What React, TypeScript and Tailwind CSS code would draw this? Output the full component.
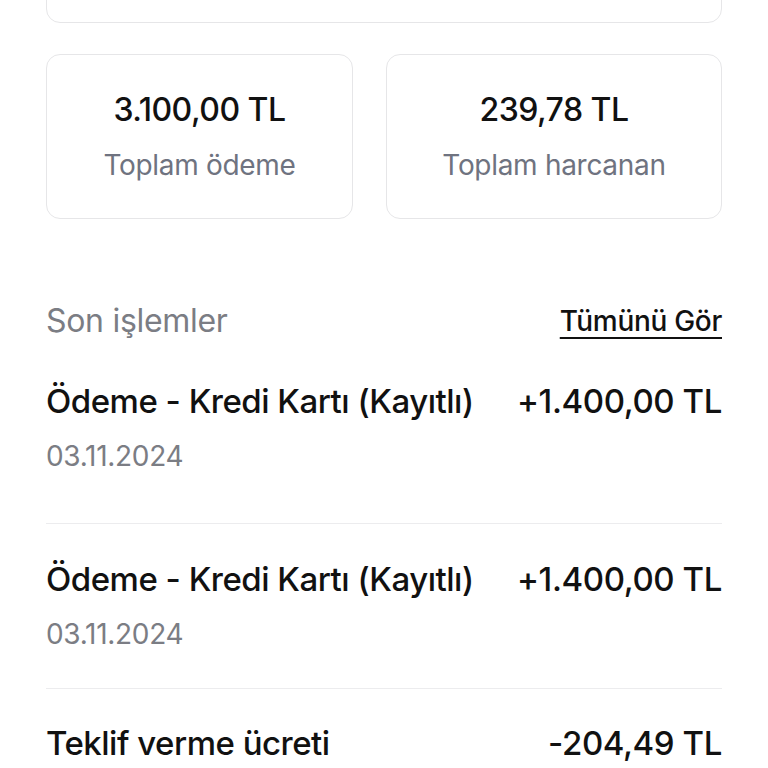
import React from "react";

type Tx = {
  title: string;
  date?: string;
  amount: string;
  pad: string;
};

const txs: Tx[] = [
  { title: "Ödeme - Kredi Kartı (Kayıtlı)", date: "03.11.2024", amount: "+1.400,00 TL", pad: "border-b border-[#ececee] pb-[53px]" },
  { title: "Ödeme - Kredi Kartı (Kayıtlı)", date: "03.11.2024", amount: "+1.400,00 TL", pad: "border-b border-[#ececee] pt-[39px] pb-[40px]" },
  { title: "Teklif verme ücreti", amount: "-204,49 TL", pad: "pt-[38px]" },
];

function StatCard({ value, label, className }: { value: string; label: string; className: string }) {
  return (
    <div
      className={`flex h-[165px] flex-col items-center justify-center rounded-[14px] border border-[#e6e6e8] bg-white ${className}`}
    >
      <p className="text-[32px] font-medium leading-none tracking-[-0.5px] text-[#111]">{value}</p>
      <p className="mt-[25px] text-[28px] leading-none tracking-[-0.3px] text-[#6f7380]">{label}</p>
    </div>
  );
}

export default function App() {
  return (
    <div
      className="h-[768px] w-[768px] overflow-hidden bg-white px-[46px]"
      style={{ fontFamily: "Inter, 'Noto Sans', sans-serif" }}
    >
      <div className="-mt-[40px] h-[63px] rounded-[14px] border border-[#e6e6e8]" />

      <div className="mt-[31px] flex gap-[33px]">
        <StatCard className="w-[307px]" value="3.100,00 TL" label="Toplam ödeme" />
        <StatCard className="flex-1" value="239,78 TL" label="Toplam harcanan" />
      </div>

      <div className="mt-[86px] flex items-center justify-between">
        <h2 className="text-[32px] leading-none tracking-[-0.3px] text-[#7b7d84]">Son işlemler</h2>
        <a className="text-[28px] font-medium leading-none tracking-[-0.3px] text-[#111] underline decoration-[1.5px] underline-offset-[6px]">
          Tümünü Gör
        </a>
      </div>

      <div className="mt-[48px] flex flex-col">
        {txs.map((tx, i) => (
          <div key={i} className={tx.pad}>
            <div className="flex items-center justify-between">
              <span className="text-[33px] font-medium leading-none tracking-[-0.5px] text-[#111]">{tx.title}</span>
              <span className="text-[33px] font-medium leading-none tracking-[-0.4px] text-[#111]">{tx.amount}</span>
            </div>
            {tx.date && (
              <p className="mt-[24px] text-[28px] leading-none tracking-[-0.3px] text-[#7b7d84]">{tx.date}</p>
            )}
          </div>
        ))}
      </div>
    </div>
  );
}
